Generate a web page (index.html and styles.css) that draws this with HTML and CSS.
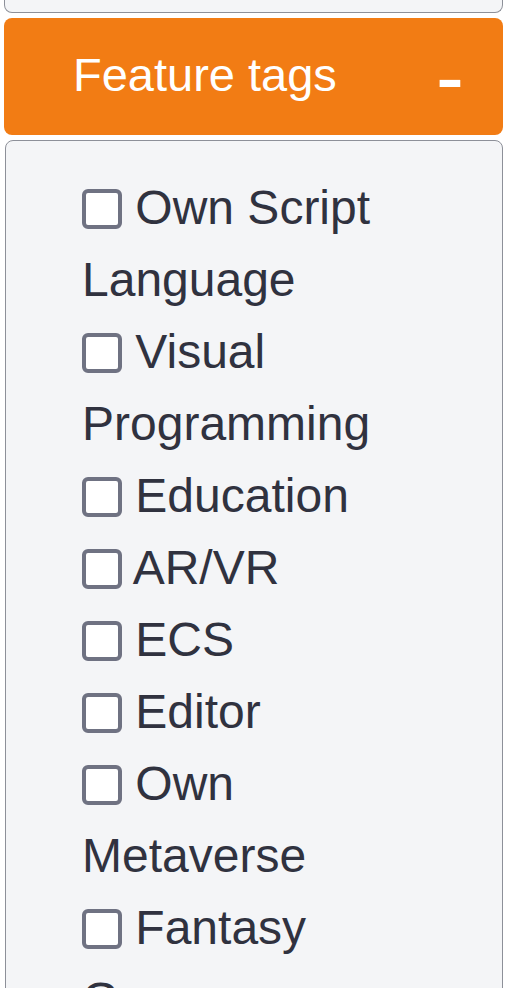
FILE: index.html
```html
<!DOCTYPE html>
<html lang="en">
<head>
<meta charset="utf-8">
<title>Feature tags</title>
<link rel="stylesheet" href="styles.css">
</head>
<body>
<div class="page">
  <div class="prev-card"></div>
  <div class="panel-head">
    <span class="panel-title">Feature tags</span>
    <span class="panel-toggle">-</span>
  </div>
  <div class="panel-body">
    <div class="tag-list">
      <label class="tag"><input type="checkbox" class="tag-check"> Own Script Language</label>
      <label class="tag"><input type="checkbox" class="tag-check"> Visual Programming</label>
      <label class="tag"><input type="checkbox" class="tag-check"> Education</label>
      <label class="tag"><input type="checkbox" class="tag-check"> AR/VR</label>
      <label class="tag"><input type="checkbox" class="tag-check"> ECS</label>
      <label class="tag"><input type="checkbox" class="tag-check"> Editor</label>
      <label class="tag"><input type="checkbox" class="tag-check"> Own Metaverse</label>
      <label class="tag"><input type="checkbox" class="tag-check"> Fantasy Games</label>
    </div>
  </div>
</div>
</body>
</html>
```

FILE: styles.css
```css
html, body {
  margin: 0;
  padding: 0;
  background: #ffffff;
}

body {
  font-family: "Liberation Sans", Arial, sans-serif;
  color: #30323f;
  overflow: hidden;
  height: 988px;
}

.page {
  width: 499px;
  margin-left: 4px;
  display: flex;
  flex-direction: column;
}

.prev-card {
  height: 12px;
  background: #f4f5f7;
  border: 1px solid #8d9099;
  border-top: none;
  border-radius: 0 0 8px 8px;
}

.panel-head {
  margin-top: 5px;
  height: 117px;
  background: #f27c14;
  border-radius: 8px;
  display: flex;
  align-items: center;
  padding: 0 41px 0 69px;
  color: #ffffff;
}

.panel-title {
  font-size: 47px;
  line-height: 1;
  margin-top: -4px;
}

.panel-toggle {
  margin-left: auto;
  font-size: 60px;
  font-weight: bold;
  line-height: 1;
  transform: scaleX(1.35);
  margin-top: 4px;
  margin-right: 2px;
}

.panel-body {
  margin-top: 5px;
  margin-left: 1px;
  background: #f4f5f7;
  border: 1px solid #8d9099;
  border-radius: 8px;
  padding: 31px 0 40px 76px;
}

.tag-list {
  width: 352px;
  display: flex;
  flex-direction: column;
}

.tag {
  display: block;
  font-size: 48px;
  line-height: 72px;
}

.tag-check {
  appearance: none;
  -webkit-appearance: none;
  margin: 0;
  width: 40px;
  height: 40px;
  box-sizing: border-box;
  border: 4px solid #6f7282;
  border-radius: 6px;
  background: #ffffff;
  vertical-align: -5px;
}
```
